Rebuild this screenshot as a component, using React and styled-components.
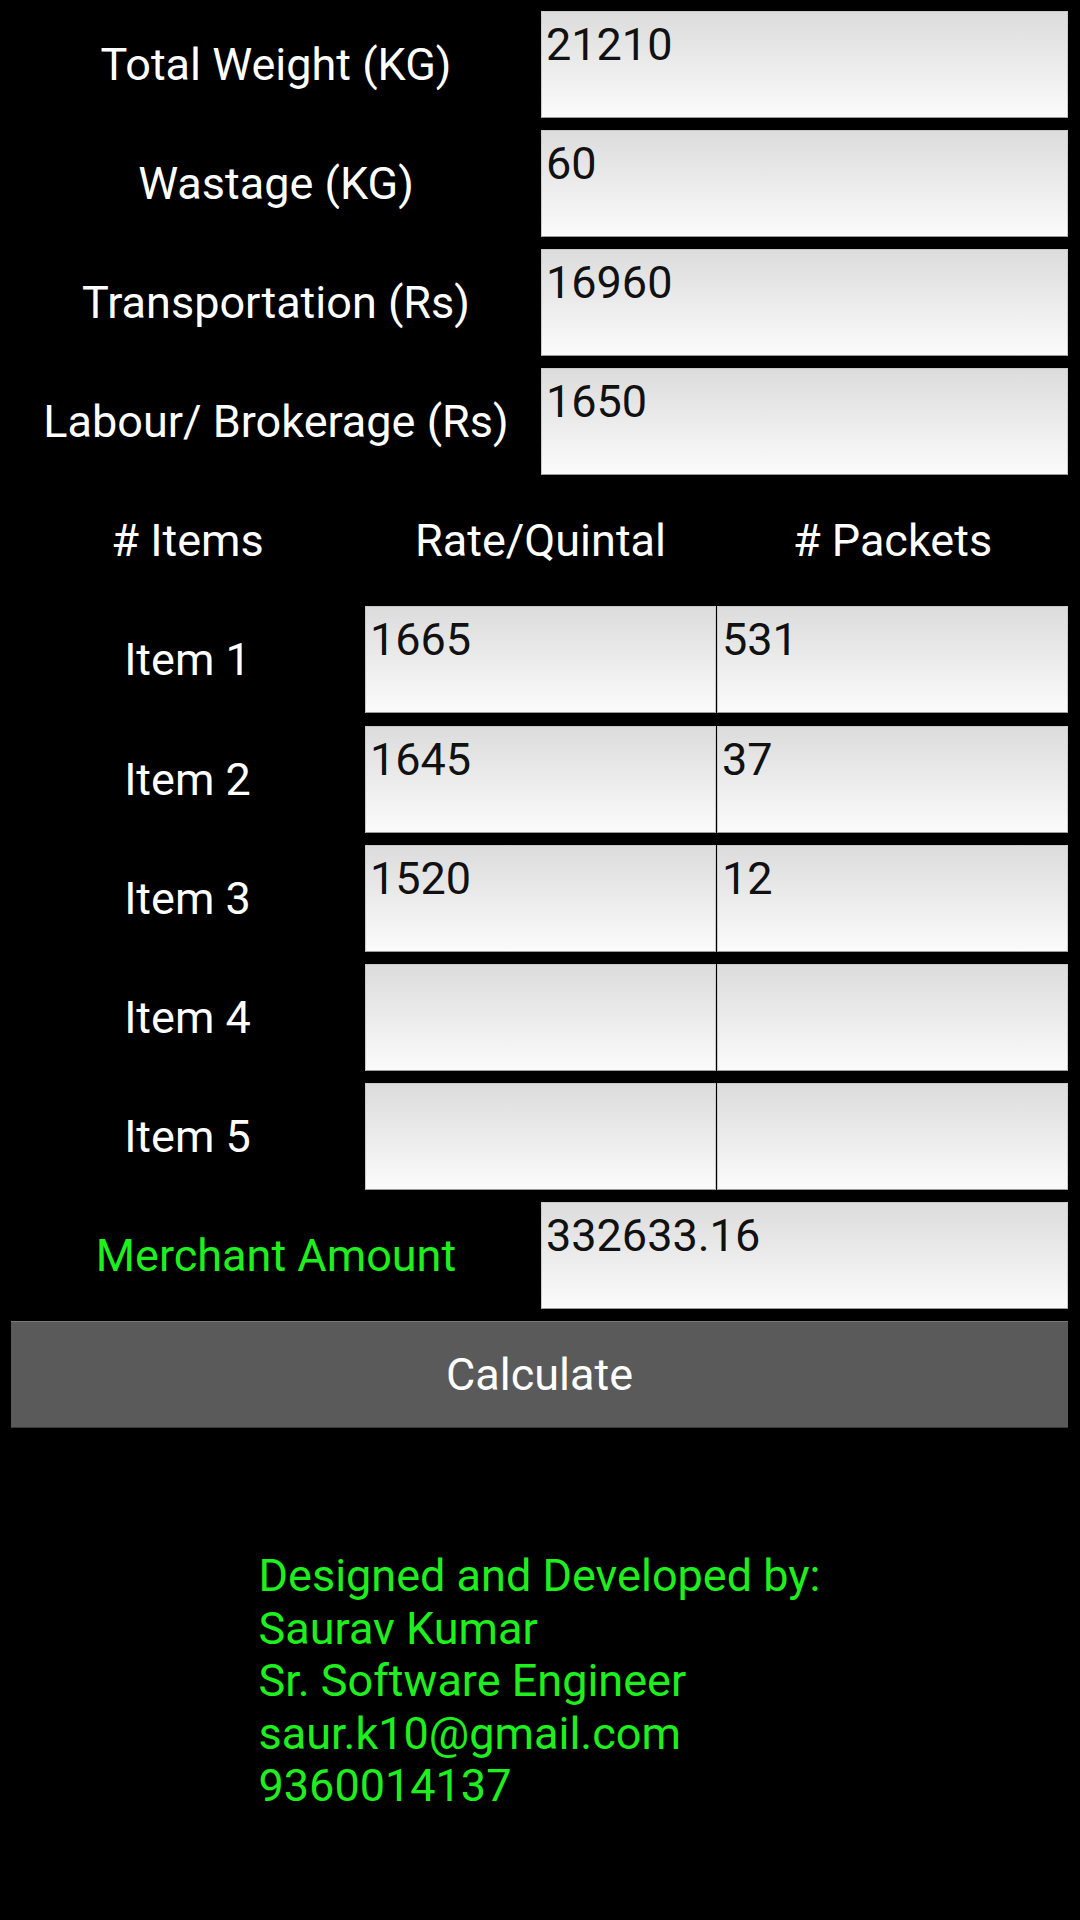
import React from 'react'
import styled, { createGlobalStyle } from 'styled-components'

const GlobalStyle = createGlobalStyle`
  html, body {
    margin: 0;
    padding: 0;
    background: #000;
  }
  body {
    font-family: Roboto, "Noto Sans", "Liberation Sans", sans-serif;
  }
`

const Page = styled.div`
  width: 1080px;
  min-height: 1920px;
  box-sizing: border-box;
  background: #000;
  padding: 11px 12px 0 11px;
  display: flex;
  flex-direction: column;
  gap: 12.1px;
`

const FieldRow = styled.div`
  display: grid;
  grid-template-columns: 530px 1fr;
  height: 107px;
`

const ItemRow = styled.div`
  display: grid;
  grid-template-columns: 353px 1fr 1fr;
  column-gap: 1px;
  height: 107px;
`

const Label = styled.div`
  display: flex;
  align-items: center;
  justify-content: center;
  color: ${(p) => (p.$green ? '#1ef01e' : '#fff')};
  font-size: 45px;
  white-space: nowrap;
`

const Field = styled.input`
  width: 100%;
  height: 107px;
  box-sizing: border-box;
  margin: 0;
  padding: 6px 4px 46px;
  border: 1px solid #c9c9c9;
  border-bottom-color: #9a9a9a;
  border-radius: 0;
  background: linear-gradient(to bottom, #dcdcdc 0%, #fbfbfb 100%);
  color: #111;
  font-family: Roboto, "Noto Sans", sans-serif;
  font-size: 45px;
  line-height: 52px;
  outline: none;
`

const CalcButton = styled.button`
  height: 107px;
  width: 100%;
  margin: 0;
  border: none;
  border-top: 1px solid #7a7a7a;
  border-bottom: 1px solid #3a3a3a;
  background: #5a5a5a;
  color: #fff;
  font-family: Roboto, "Noto Sans", sans-serif;
  font-size: 45px;
  cursor: pointer;
`

const Footer = styled.div`
  align-self: center;
  margin-top: 110px;
  color: #1ef01e;
  font-size: 45px;
  line-height: 52.5px;
`

const fields = [
  { label: 'Total Weight (KG)', value: '21210' },
  { label: 'Wastage (KG)', value: '60' },
  { label: 'Transportation (Rs)', value: '16960' },
  { label: 'Labour/ Brokerage (Rs)', value: '1650' },
]

const items = [
  { rate: '1665', packets: '531' },
  { rate: '1645', packets: '37' },
  { rate: '1520', packets: '12' },
  { rate: '', packets: '' },
  { rate: '', packets: '' },
]

export default function App() {
  return (
    <>
      <GlobalStyle />
      <Page>
        {fields.map((f) => (
          <FieldRow key={f.label}>
            <Label>{f.label}</Label>
            <Field type="text" defaultValue={f.value} />
          </FieldRow>
        ))}

        <ItemRow>
          <Label># Items</Label>
          <Label>Rate/Quintal</Label>
          <Label># Packets</Label>
        </ItemRow>

        {items.map((item, index) => (
          <ItemRow key={index}>
            <Label>Item {index + 1}</Label>
            <Field type="text" defaultValue={item.rate} />
            <Field type="text" defaultValue={item.packets} />
          </ItemRow>
        ))}

        <FieldRow>
          <Label $green>Merchant Amount</Label>
          <Field type="text" defaultValue="332633.16" />
        </FieldRow>

        <CalcButton>Calculate</CalcButton>

        <Footer>
          <div>Designed and Developed by:</div>
          <div>Saurav Kumar</div>
          <div>Sr. Software Engineer</div>
          <div>saur.k10@gmail.com</div>
          <div>9360014137</div>
        </Footer>
      </Page>
    </>
  )
}
